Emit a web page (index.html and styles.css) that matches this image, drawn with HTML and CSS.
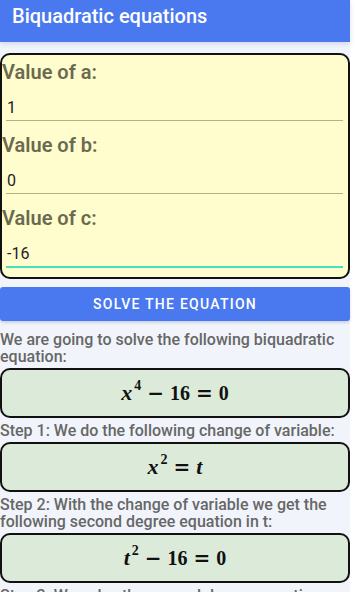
FILE: index.html
```html
<!DOCTYPE html>
<html lang="en">
<head>
<meta charset="utf-8">
<title>Biquadratic equations</title>
<link rel="stylesheet" href="styles.css">
</head>
<body>
<div class="page">
  <header class="appbar">
    <h1 class="appbar-title">Biquadratic equations</h1>
  </header>
  <main class="content">
    <section class="card">
      <div class="field">
        <label class="field-label" for="a">Value of a:</label>
        <input class="field-input" id="a" type="text" value="1">
      </div>
      <div class="field">
        <label class="field-label" for="b">Value of b:</label>
        <input class="field-input" id="b" type="text" value="0">
      </div>
      <div class="field field-active">
        <label class="field-label" for="c">Value of c:</label>
        <input class="field-input" id="c" type="text" value="-16">
      </div>
    </section>
    <button class="solve" type="button">SOLVE THE EQUATION</button>
    <p class="step step-first">We are going to solve the following biquadratic equation:</p>
    <div class="math"><span class="var">x</span><sup class="sup">4</sup><span class="bin">−</span><span class="num">16</span><span class="rel">=</span><span class="num">0</span></div>
    <p class="step">Step 1: We do the following change of variable:</p>
    <div class="math"><span class="var">x</span><sup class="sup">2</sup><span class="rel">=</span><span class="var">t</span></div>
    <p class="step">Step 2: With the change of variable we get the following second degree equation in t:</p>
    <div class="math"><span class="var">t</span><sup class="sup">2</sup><span class="bin">−</span><span class="num">16</span><span class="rel">=</span><span class="num">0</span></div>
    <p class="step">Step 3: We solve the second degree equation with the formula:</p>
  </main>
</div>
</body>
</html>
```

FILE: styles.css
```css
html, body {
  margin: 0;
  padding: 0;
  background: #ffffff;
}

body {
  font-family: Roboto, "Liberation Sans", sans-serif;
  overflow: hidden;
}

.page {
  width: 350px;
  min-height: 592px;
  background: #f1f5fb;
}

.appbar {
  height: 42px;
  box-sizing: border-box;
  padding: 4px 0 0 12px;
  background: #4a78ef;
  box-shadow: 0 2px 5px rgba(60, 80, 140, 0.18);
  position: relative;
  z-index: 1;
}

.appbar-title {
  margin: 0;
  font-size: 20px;
  line-height: 24px;
  font-weight: 500;
  color: #ffffff;
}

.content {
  padding-top: 11px;
}

.card {
  background: #fffdcd;
  border: 2px solid #111111;
  border-radius: 10px;
  padding: 5px 0 9px 0;
}

.field {
  display: flex;
  flex-direction: column;
  margin-bottom: 12px;
}

.field-active {
  margin-bottom: 0;
}

.field-label {
  font-size: 20px;
  line-height: 24px;
  font-weight: 600;
  color: #6b6a4f;
}

.field-input {
  margin: 0 5px 0 4px;
  padding: 14px 0 3px 1px;
  font-family: Roboto, "Liberation Sans", sans-serif;
  font-size: 16px;
  line-height: 19px;
  height: 19px;
  color: #222222;
  background: transparent;
  border: none;
  border-bottom: 1px solid #b3af88;
  outline: none;
}

.field-active .field-input {
  border-bottom: 2px solid #46e0bd;
}

.solve {
  display: block;
  width: 100%;
  height: 34px;
  margin-top: 8px;
  padding: 0;
  border: none;
  border-radius: 3px;
  background: #4a78ef;
  color: #ffffff;
  font-family: Roboto, "Liberation Sans", sans-serif;
  font-size: 14px;
  font-weight: 500;
  letter-spacing: 1.25px;
  box-shadow: 0 2px 3px rgba(60, 80, 140, 0.2);
}

.step {
  margin: 4px 0 0 0;
  font-size: 16px;
  line-height: 17px;
  font-weight: 500;
  color: #676767;
}

.step-first {
  margin-top: 10px;
}

.math {
  margin-top: 3px;
  height: 46px;
  box-sizing: content-box;
  border: 2px solid #111111;
  border-radius: 10px;
  background: #dcebd9;
  display: flex;
  align-items: center;
  justify-content: center;
  font-family: "Liberation Serif", "DejaVu Serif", serif;
  font-weight: bold;
  font-size: 20px;
  color: #111111;
}

.var {
  font-style: italic;
  font-size: 22px;
}

.sup {
  font-size: 14px;
  vertical-align: 0;
  position: relative;
  top: -7px;
  margin-left: 2px;
}

.num {
  font-size: 20px;
}

.bin {
  font-family: "DejaVu Serif", serif;
  font-weight: bold;
  margin: 0 6px;
}

.rel {
  font-family: "DejaVu Serif", serif;
  font-weight: bold;
  margin: 0 6px;
}
```
